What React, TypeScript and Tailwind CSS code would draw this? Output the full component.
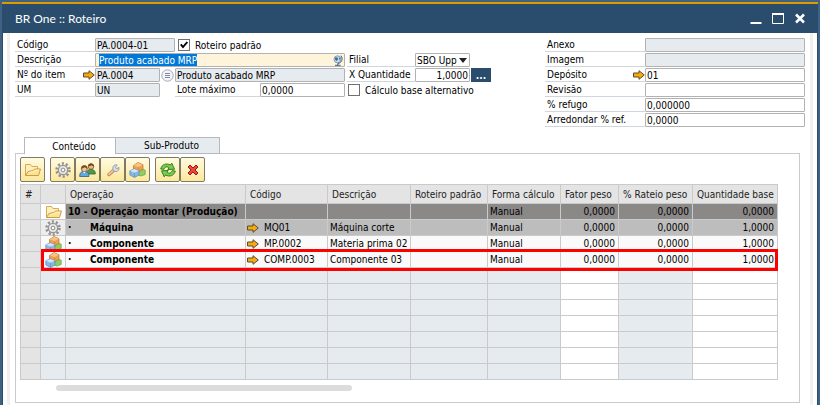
import { useEffect, useRef, type ReactNode } from "react";

const field = "h-3.5 min-w-0 rounded-[1px] border border-[#b2b2b2] px-px outline-none";

function Arrow() {
  return (
    <svg viewBox="0 0 12 10" className="h-2.5 w-3 shrink-0" aria-hidden="true">
      <path d="M.5 3H6V.7L11.3 5 6 9.3V7H.5Z" fill="#f5ab0c" stroke="#5d4a35" strokeWidth="1" />
    </svg>
  );
}

function FolderIcon() {
  return (
    <svg viewBox="0 0 17 16" className="h-4 w-[17px]" aria-hidden="true">
      <path d="M1.5 13.500V2.500h5L8 4.500h5.500V7" fill="#fdf0bd" stroke="#d9a85a" />
      <path d="M1.5 13.500 4 9.500l5-1L10.500 7h6l-2 6.500Z" fill="#fbe396" stroke="#cf9c45" />
      <path d="M5.500 10.500 10 9.500 11 8.300h4" fill="none" stroke="#fff6cf" />
    </svg>
  );
}

function GearIcon() {
  return (
    <svg viewBox="0 0 16 16" className="h-4 w-4" aria-hidden="true">
      <circle cx="8" cy="8" r="6.500" fill="none" stroke="#8f8f8f" strokeWidth="2.400" strokeDasharray="2.100 1.990" />
      <circle cx="8" cy="8" r="4.700" fill="#dcdcdc" stroke="#939393" strokeWidth="1.200" />
      <circle cx="8" cy="8" r="3.200" fill="none" stroke="#f1f1f1" />
      <circle cx="8" cy="8" r="1.900" fill="#fafafa" stroke="#8b8b8b" />
    </svg>
  );
}

function UsersIcon() {
  return (
    <svg viewBox="0 0 17 16" className="h-4 w-[17px]" aria-hidden="true">
      <path d="M8 12c0-4 1.500-4.500 4-4.500s4.300 1 4.300 4.500Z" fill="#4d9a45" stroke="#2f6b30" strokeWidth=".8" />
      <circle cx="12" cy="4.500" r="2.800" fill="#e9b98a" stroke="#6b4423" strokeWidth=".7" />
      <path d="M9 4.500C9 .5 15 .5 15 4.500c-1.500-.2-2-1.300-2.500-1.300S10.500 4.500 9 4.500Z" fill="#74421c" />
      <path d="M.7 14.500c0-4 1.700-5 4.500-5S10 10.500 10 14.500Z" fill="#61a8de" stroke="#27608f" strokeWidth=".8" />
      <circle cx="5.300" cy="6.700" r="3" fill="#f0c598" stroke="#6b4423" strokeWidth=".7" />
      <path d="M2.200 6.700c0-4.500 6.300-4.500 6.300 0-1.500-.2-2-1.500-2.700-1.500S4 6.700 2.200 6.700Z" fill="#7b481f" />
      <path d="m4 9.800 1.300 2 1.300-2Z" fill="#fff" />
    </svg>
  );
}

function WrenchIcon() {
  return (
    <svg viewBox="0 0 16 16" className="h-4 w-4" aria-hidden="true">
      <path d="M4 12.500 8.500 8.500" stroke="#b98a5c" strokeWidth="3.400" strokeLinecap="round" />
      <path d="M4 12.300 8.200 8.600" stroke="#ecc79b" strokeWidth="1.800" strokeLinecap="round" />
      <path d="m7.800 7.500.2-3 2.300-1.700 2 .2-1.800 2 .7 1.500 2-.3.600-1 .3 2.300-2.200 2-2.600-.2Z" fill="#d8dde8" stroke="#868ea5" strokeWidth=".8" />
    </svg>
  );
}

function CubesIcon() {
  return (
    <svg viewBox="0 0 17 16" className="h-4 w-[17px]" aria-hidden="true">
      <path d="m9 8.500 4-1.500 3.200 1.200v4.300L12 14 9 13Z" fill="#8fce63" stroke="#5ba045" strokeWidth=".7" />
      <path d="m4.500 3.500 4.500-3 5 2.200v4.800L9.800 9.800 4.500 8Z" fill="#eda04d" stroke="#b8742f" strokeWidth=".7" />
      <path d="m4.700 3.500 4.300-2.700 4.700 2-3.900 2.400Z" fill="#f7c283" />
      <path d="M9.800 5.400v4.200" stroke="#c47f38" strokeWidth=".7" />
      <path d="m.8 8.800 4.500-2 4.700 2V13l-4.500 2.500L.8 13Z" fill="#86b8e4" stroke="#5b89bb" strokeWidth=".7" />
      <path d="m1 8.800 4.300-1.800 4.500 1.800-4.300 2Z" fill="#d0e6f8" />
      <path d="M5.500 10.800v4.500" stroke="#5d91c4" strokeWidth=".7" />
    </svg>
  );
}

function RefreshIcon() {
  return (
    <svg viewBox="0 0 16 16" className="h-4 w-4" aria-hidden="true">
      <path d="M.7 7C1.800 2.300 6.500.8 10.300 3L11.800 1.200l2.700 6-6.700.3 1.300-1.700C7 4.200 4.800 4.700 4 7.300Z" fill="#7ccb4e" stroke="#2d8325" strokeWidth="1" />
      <path d="M15.300 9C14.200 13.700 9.500 15.200 5.700 13l-1.500 1.800-2.700-6 6.700-.3-1.300 1.700c2.100 1.600 4.300 1.100 5.100-1.500Z" fill="#7ccb4e" stroke="#2d8325" strokeWidth="1" />
    </svg>
  );
}

function DeleteIcon() {
  return (
    <svg viewBox="0 0 12 12" className="h-3 w-3" aria-hidden="true">
      <path d="M1 3 3 1l3 3 3-3 2 2-3 3 3 3-2 2-3-3-3 3-2-2 3-3Z" fill="#e8483c" stroke="#a51515" strokeWidth="1" />
    </svg>
  );
}

function GlobeIcon() {
  return (
    <svg viewBox="0 0 10 11" className="h-[11px] w-2.5" aria-hidden="true">
      <circle cx="4.500" cy="4.300" r="3.500" fill="#c3daee" stroke="#6d8fae" strokeWidth=".8" />
      <path d="M2 2.500h2.500l.7 1.500-1.500 2L2 4.500ZM5.800 2l1.700 1.500-.7 2Z" fill="#44698a" />
      <path d="M8 .7c2.300 3 .8 7.300-3.200 7.800v1.500M2 10.300h5.500" stroke="#3e5f7d" fill="none" />
    </svg>
  );
}

function ListIcon() {
  return (
    <svg viewBox="0 0 13 13" className="h-[13px] w-[13px]" aria-hidden="true">
      <circle cx="6.500" cy="6.500" r="5.700" fill="#f3f5fb" stroke="#a3a8bd" />
      <path d="M4 4.500h5M4 6.500h5M4 8.500h5" stroke="#8388a0" />
    </svg>
  );
}

function Label({ htmlFor, children, className }: { htmlFor: string; children: ReactNode; className: string }) {
  return (
    <label htmlFor={htmlFor} className={`flex h-3.5 items-center border-b border-[#d0d6db] pl-0.5 ${className}`}>
      {children}
    </label>
  );
}

function Check({ id, label, checked }: { id: string; label: string; checked: boolean }) {
  return (
    <span className="flex h-3.5 items-center pl-[3px]">
      <span className="grid h-3 w-3">
        <input
          id={id}
          type="checkbox"
          defaultChecked={checked}
          className="peer col-start-1 row-start-1 h-3 w-3 appearance-none border border-[#707070] bg-white"
        />
        <svg viewBox="0 0 12 12" className="pointer-events-none col-start-1 row-start-1 hidden h-3 w-3 peer-checked:block" aria-hidden="true">
          <path d="M2.800 5.300 5 8l4.300-5" fill="none" stroke="#000" strokeWidth="1.900" />
        </svg>
      </span>
      <label htmlFor={id} className="pl-[5px]">{label}</label>
    </span>
  );
}

const sideFields = [
  { id: "anexo", label: "Anexo", value: "", locked: true },
  { id: "imagem", label: "Imagem", value: "", locked: true },
  { id: "deposito", label: "Depósito", value: "01", arrow: true },
  { id: "revisao", label: "Revisão", value: "" },
  { id: "refugo", label: "% refugo", value: "0,000000" },
  { id: "arredondar", label: "Arredondar % ref.", value: "0,0000" },
];

const toolGroups = [
  [{ name: "Abrir", icon: <FolderIcon /> }],
  [
    { name: "Máquina", icon: <GearIcon /> },
    { name: "Mão de obra", icon: <UsersIcon /> },
    { name: "Ferramenta", icon: <WrenchIcon /> },
    { name: "Componente", icon: <CubesIcon /> },
  ],
  [
    { name: "Atualizar", icon: <RefreshIcon /> },
    { name: "Excluir", icon: <DeleteIcon /> },
  ],
];

const columns = [
  { title: "#", width: "w-5" },
  { title: "", width: "w-[25px]" },
  { title: "Operação", width: "" },
  { title: "Código", width: "w-[82px]" },
  { title: "Descrição", width: "w-[83px]" },
  { title: "Roteiro padrão", width: "w-[77px]" },
  { title: "Forma cálculo", width: "w-[73px]" },
  { title: "Fator peso", width: "w-[58px]" },
  { title: "% Rateio peso", width: "w-[74px]" },
  { title: "Quantidade base", width: "w-[85px]" },
];

const rows = [
  { icon: <FolderIcon />, bg: "bg-[#8b8888]", iconBg: "bg-white", op: "10 - Operação montar (Produção)", child: false, code: "", desc: "", qty: "0,0000" },
  { icon: <GearIcon />, bg: "bg-[#bdbdbd]", iconBg: "bg-[#ededed]", op: "Máquina", child: true, code: "MQ01", desc: "Máquina corte", qty: "1,0000" },
  { icon: <CubesIcon />, bg: "bg-[#fafafa]", iconBg: "bg-[#fafafa]", op: "Componente", child: true, code: "MP.0002", desc: "Materia prima 02", qty: "1,0000" },
  { icon: <CubesIcon />, bg: "bg-[#fafafa]", iconBg: "bg-[#fafafa]", op: "Componente", child: true, code: "COMP.0003", desc: "Componente 03", qty: "1,0000" },
];

const cell = "h-4 border-r border-b border-[#cacaca] p-0";

function Grid() {
  return (
    <div className="relative">
      <table className="w-full table-fixed border-separate border-spacing-0 border-t border-l border-[#cacaca] leading-[15px] whitespace-nowrap">
        <thead>
          <tr>
            {columns.map((c, i) => (
              <th key={i} className={`h-[19px] border-r border-b border-[#cacaca] bg-[#e4e4e4] p-0 pl-1 text-left font-normal text-[#222] ${c.width}`}>
                {c.title}
              </th>
            ))}
          </tr>
        </thead>
        <tbody>
          {rows.map((r, i) => (
            <tr key={i} className={r.bg}>
              <td className={`${cell} bg-[#e4e4e4]`} />
              <td className={`${cell} ${r.iconBg}`}>
                <span className="flex h-[15px] items-center justify-center">{r.icon}</span>
              </td>
              <td className={`${cell} pl-0.5 font-bold`}>
                {r.child ? (
                  <span className="flex">
                    <span className="w-[22px]">·</span>
                    {r.op}
                  </span>
                ) : (
                  r.op
                )}
              </td>
              <td className={`${cell} pl-px`}>
                {r.code && (
                  <span className="flex items-center gap-[5px]">
                    <Arrow />
                    {r.code}
                  </span>
                )}
              </td>
              <td className={`${cell} pl-0.5`}>{r.desc}</td>
              <td className={cell} />
              <td className={`${cell} pl-0.5`}>Manual</td>
              <td className={`${cell} pr-[3px] text-right`}>0,0000</td>
              <td className={`${cell} pr-[3px] text-right`}>0,0000</td>
              <td className={`${cell} pr-[3px] text-right`}>{r.qty}</td>
            </tr>
          ))}
          {Array.from({ length: 7 }, (_, i) => (
            <tr key={i} className="bg-[#e6ebef]">
              {columns.map((_c, j) => (
                <td key={j} className={`${cell} ${j === 0 ? "bg-[#e4e4e4]" : j === 7 || j === 9 ? "bg-white" : ""}`} />
              ))}
            </tr>
          ))}
        </tbody>
      </table>
      <div className="pointer-events-none absolute top-[65px] right-0 left-[21px] h-[22px] border-3 border-[#fe0000]" />
    </div>
  );
}

export default function App() {
  const description = useRef<HTMLInputElement>(null);

  useEffect(() => {
    description.current?.focus();
    description.current?.select();
  }, []);

  return (
    <div className="min-h-screen bg-[#3e6184] px-0.5 pt-0.5 font-['DejaVu_Sans_Condensed','DejaVu_Sans',sans-serif] text-[10px] leading-[13px] text-black">
      <header className="flex h-[31px] items-center justify-between border-t-2 border-[#dd9b00] bg-[#2b4d6d] pr-3 pl-[13px] text-white">
        <h1 className="font-[Lato,'Open_Sans',sans-serif] text-[12px] leading-4">BR One :: Roteiro</h1>
        <div className="flex h-4 gap-[10px]">
          <button aria-label="Minimizar" className="h-4 w-3">
            <svg viewBox="0 0 12 16" className="h-4 w-3"><path d="M.5 12h11" stroke="#fff" strokeWidth="2" /></svg>
          </button>
          <button aria-label="Maximizar" className="h-4 w-3">
            <svg viewBox="0 0 12 16" className="h-4 w-3"><path d="M.5 2.500h11v10H.5Z" fill="none" stroke="#fff" /><path d="M0 3h12" stroke="#fff" strokeWidth="2" /></svg>
          </button>
          <button aria-label="Fechar" className="h-4 w-3">
            <svg viewBox="0 0 12 16" className="h-4 w-3"><path d="m2 3.500 8 8m0-8-8 8" stroke="#fff" strokeWidth="2.500" /></svg>
          </button>
        </div>
      </header>

      <div className="min-h-[372px] border-x border-[#2b4d6d] bg-white px-1">
        <main className="min-h-[372px] border-x-3 border-[#f0f0f0] px-[5px] pt-[5px]">
          <form className="flex justify-between">
            <div className="flex flex-col gap-px">
              <div className="flex">
                <Label htmlFor="codigo" className="w-20">Código</Label>
                <input id="codigo" readOnly defaultValue="PA.0004-01" className={`${field} w-20 bg-[#e6ebef]`} />
                <Check id="padrao" label="Roteiro padrão" checked />
              </div>
              <div className="flex">
                <Label htmlFor="descricao" className="w-20">Descrição</Label>
                <div className="flex h-3.5 w-[250px] items-center rounded-[1px] border border-[#b2b2b2] bg-[#fef3db] pr-px pl-[3px]">
                  <input
                    ref={description}
                    id="descricao"
                    defaultValue="Produto acabado MRP"
                    className="h-3 min-w-0 flex-1 bg-transparent outline-none selection:bg-[#0078d7] selection:text-white"
                  />
                  <GlobeIcon />
                </div>
                <Label htmlFor="filial" className="ml-0.5 w-[68px]">Filial</Label>
                <div className="grid h-3.5 w-[55px] items-center rounded-[1px] border border-[#b2b2b2]">
                  <select id="filial" className="col-start-1 row-start-1 h-3 w-full appearance-none bg-transparent pl-px outline-none">
                    <option>SBO Upp</option>
                  </select>
                  <svg viewBox="0 0 8 5" className="pointer-events-none col-start-1 row-start-1 mr-0.5 h-[5px] w-2 justify-self-end" aria-hidden="true">
                    <path d="M0 0h8L4 5Z" fill="#222" />
                  </svg>
                </div>
              </div>
              <div className="flex">
                <Label htmlFor="item" className="w-20 justify-between">Nº do item<Arrow /></Label>
                <input id="item" readOnly defaultValue="PA.0004" className={`${field} w-[65px] bg-[#e6ebef]`} />
                <button type="button" aria-label="Lista" className="flex h-3.5 w-[15px] items-center justify-center"><ListIcon /></button>
                <input aria-label="Descrição do item" readOnly defaultValue="Produto acabado MRP" className={`${field} w-[170px] bg-[#e6ebef]`} />
                <Label htmlFor="quantidade" className="ml-0.5 w-[68px] whitespace-nowrap">X Quantidade</Label>
                <input id="quantidade" defaultValue="1,0000" className={`${field} w-[55px] text-right`} />
                <button type="button" aria-label="Mais" className="ml-px flex h-3.5 w-5 items-center justify-center bg-[#2b4d6d] font-bold text-white">...</button>
              </div>
              <div className="flex">
                <Label htmlFor="um" className="w-20">UM</Label>
                <input id="um" readOnly defaultValue="UN" className={`${field} w-[65px] bg-[#e6ebef]`} />
                <Label htmlFor="lote" className="ml-[15px] w-[85px]">Lote máximo</Label>
                <input id="lote" defaultValue="0,0000" className={`${field} w-[85px]`} />
                <Check id="alternativo" label="Cálculo base alternativo" checked={false} />
              </div>
            </div>

            <div className="flex flex-col gap-px">
              {sideFields.map((f) => (
                <div key={f.id} className="flex">
                  <Label htmlFor={f.id} className="w-[100px] justify-between whitespace-nowrap">{f.label}{f.arrow && <Arrow />}</Label>
                  <input id={f.id} readOnly={f.locked} defaultValue={f.value} className={`${field} w-40 ${f.locked ? "bg-[#e6ebef]" : "bg-white"}`} />
                </div>
              ))}
            </div>
          </form>

          <div className="mt-[10px] mr-[5px]">
            <div className="flex h-[17px]" role="tablist">
              <div className="w-[9px] border-b border-[#cacaca]" />
              <button role="tab" aria-selected="true" className="w-[91px] border-t border-l border-[#b5b9bd] bg-white pl-2">Conteúdo</button>
              <button role="tab" aria-selected="false" className="w-[105px] border border-[#b5b9bd] bg-[#e6ebef] pl-2">Sub-Produto</button>
              <div className="flex-1 border-b border-[#cacaca]" />
            </div>
            <section className="border-x border-b border-[#cacaca] pt-[3px] pr-[21px] pb-[11px] pl-1">
              <div className="mb-0.5 flex gap-[5px]">
                {toolGroups.map((group, i) => (
                  <div key={i} className="flex">
                    {group.map((t) => (
                      <button
                        key={t.name}
                        aria-label={t.name}
                        className="flex h-[25px] w-[25px] items-center justify-center rounded-[2px] border border-[#7f7a63] bg-linear-to-b from-[#fffbe0] to-[#fce79a]"
                      >
                        {t.icon}
                      </button>
                    ))}
                  </div>
                ))}
              </div>
              <Grid />
              <div className="mt-[5px] ml-9 h-1.5 w-[39%] rounded-full bg-[#dcdcdc]" />
            </section>
          </div>
        </main>
      </div>
    </div>
  );
}
